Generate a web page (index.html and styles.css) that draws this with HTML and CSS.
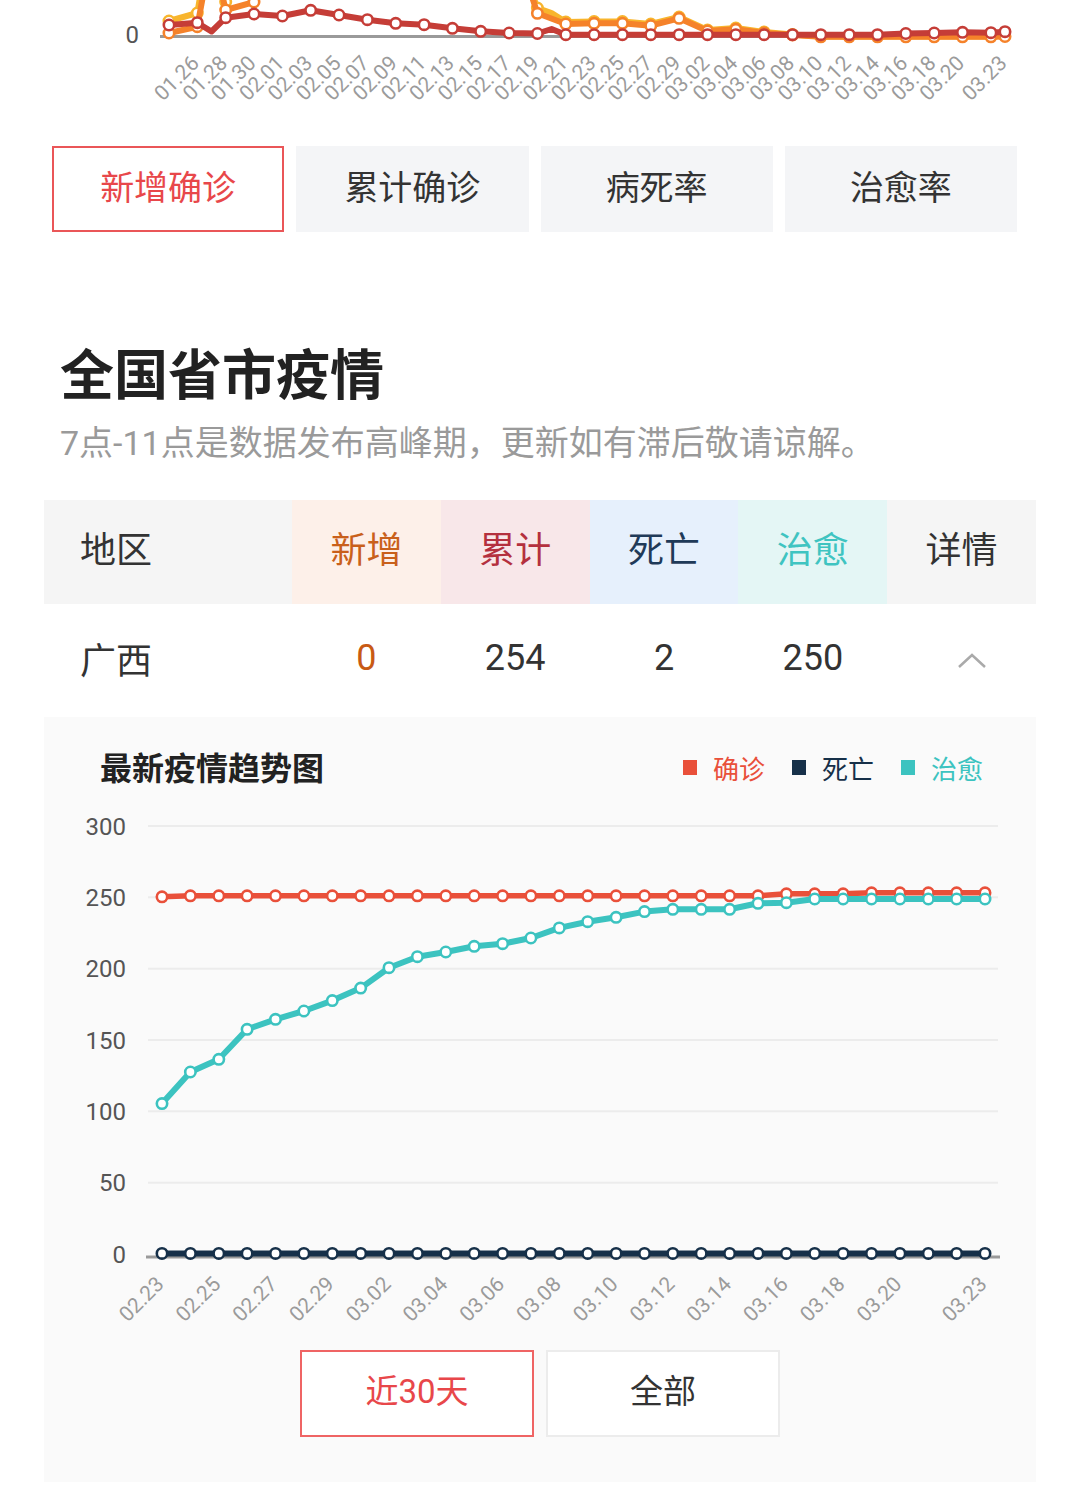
FILE: index.html
```html
<!DOCTYPE html>
<html lang="zh-CN">
<head>
<meta charset="utf-8">
<title>全国省市疫情</title>
<link rel="stylesheet" href="styles.css">
</head>
<body>
<div class="page">
  <section class="overview">
    <svg id="overview" class="overview-svg" width="1069" height="130" viewBox="0 0 1069 130">
      <line class="axis" x1="160" y1="36.5" x2="1010" y2="36.5"></line>
      <text class="ylabel" x="139" y="42.5">0</text>
    </svg>
    <div class="tabs">
      <button class="tab active">新增确诊</button>
      <button class="tab">累计确诊</button>
      <button class="tab">病死率</button>
      <button class="tab">治愈率</button>
    </div>
  </section>

  <section class="province">
    <h2 class="section-title">全国省市疫情</h2>
    <p class="section-note">7点-11点是数据发布高峰期，更新如有滞后敬请谅解。</p>

    <div class="table">
      <div class="thead">
        <div class="th col-area">地区</div>
        <div class="th col-new">新增</div>
        <div class="th col-total">累计</div>
        <div class="th col-dead">死亡</div>
        <div class="th col-cured">治愈</div>
        <div class="th col-detail">详情</div>
      </div>
      <div class="trow">
        <div class="td col-area">广西</div>
        <div class="td num-new">0</div>
        <div class="td">254</div>
        <div class="td">2</div>
        <div class="td">250</div>
        <div class="td caret-cell">
          <svg class="caret" width="30" height="16" viewBox="0 0 30 16"><polyline points="2,14 15,2 28,14"></polyline></svg>
        </div>
      </div>

      <div class="detail-panel">
        <div class="panel-head">
          <h3 class="panel-title">最新疫情趋势图</h3>
          <ul class="legend">
            <li class="lg-confirm"><span class="swatch"></span>确诊</li>
            <li class="lg-dead"><span class="swatch"></span>死亡</li>
            <li class="lg-cured"><span class="swatch"></span>治愈</li>
          </ul>
        </div>
        <svg id="trend" class="trend-svg" width="992" height="556" viewBox="44 789 992 556">
          <line class="grid" x1="148" y1="826" x2="998" y2="826"></line>
          <line class="grid" x1="148" y1="897.3" x2="998" y2="897.3"></line>
          <line class="grid" x1="148" y1="968.7" x2="998" y2="968.7"></line>
          <line class="grid" x1="148" y1="1040" x2="998" y2="1040"></line>
          <line class="grid" x1="148" y1="1111.3" x2="998" y2="1111.3"></line>
          <line class="grid" x1="148" y1="1182.7" x2="998" y2="1182.7"></line>
          <line class="axis" x1="146" y1="1257" x2="1000" y2="1257"></line>
          <text class="ylabel" x="126" y="834.5">300</text>
          <text class="ylabel" x="126" y="905.8">250</text>
          <text class="ylabel" x="126" y="977.2">200</text>
          <text class="ylabel" x="126" y="1048.5">150</text>
          <text class="ylabel" x="126" y="1119.8">100</text>
          <text class="ylabel" x="126" y="1191.2">50</text>
          <text class="ylabel" x="126" y="1262.5">0</text>
        </svg>
        <div class="range-switch">
          <button class="range active">近30天</button>
          <button class="range">全部</button>
        </div>
      </div>
    </div>
  </section>
</div>
<script src="script.js"></script>
</body>
</html>
```

FILE: styles.css
```css
* { box-sizing: border-box; }

html, body {
  margin: 0;
  padding: 0;
  background: #fff;
}

body {
  font-family: Roboto, "Noto Sans CJK SC", sans-serif;
  color: #333;
  width: 1069px;
}

button {
  font-family: inherit;
  padding: 0;
  margin: 0;
  cursor: pointer;
}

/* ---------- overview chart (cut at top) ---------- */
.overview-svg {
  display: block;
  overflow: hidden;
}

.axis {
  stroke: #9a9a9a;
  stroke-width: 3;
}

.grid {
  stroke: #ececec;
  stroke-width: 2;
}

.ylabel {
  font-family: Roboto, sans-serif;
  font-size: 24px;
  fill: #555;
  text-anchor: end;
}

.xlabel {
  font-family: Roboto, sans-serif;
  font-size: 21px;
  fill: #9b9b9b;
  text-anchor: end;
}

.tabs {
  display: flex;
  gap: 12px;
  margin: 16px 52px 0;
}

.tab {
  flex: 1;
  height: 86px;
  padding-bottom: 8px;
  background: #f4f5f7;
  border: 2px solid #f4f5f7;
  font-size: 34px;
  color: #333;
  display: flex;
  align-items: center;
  justify-content: center;
}

.tab.active {
  background: #fff;
  border-color: #ea5658;
  color: #e8474a;
}

/* ---------- province section ---------- */
.section-title {
  margin: 113px 0 0 60px;
  font-size: 54px;
  line-height: 64px;
  font-weight: 700;
  color: #222;
}

.section-note {
  margin: 10px 0 0 60px;
  font-size: 34px;
  line-height: 48px;
  color: #9a9a9a;
}

.table {
  margin: 33px 33px 0 44px;
}

.thead,
.trow {
  display: grid;
  grid-template-columns: 248px repeat(5, 1fr);
}

.thead {
  height: 104px;
}

.trow {
  height: 113px;
}

.th,
.td {
  display: flex;
  align-items: center;
  justify-content: center;
  font-size: 36px;
  color: #333;
}

.th {
  padding-bottom: 10px;
}

.td {
  padding-bottom: 6px;
}

.th.col-area,
.td.col-area {
  justify-content: flex-start;
  padding-left: 36px;
}

.th.col-area,
.th.col-detail {
  background: #f5f5f5;
}

.th.col-new {
  background: #fdf0e9;
  color: #c9601b;
}

.th.col-total {
  background: #f8e7e9;
  color: #b4303e;
}

.th.col-dead {
  background: #e6f0fc;
  color: #1f3a58;
}

.th.col-cured {
  background: #e4f6f5;
  color: #3fc4c1;
}

.td.num-new {
  color: #c85a14;
}

.td.caret-cell {
  padding-left: 20px;
  padding-bottom: 0;
}

.caret polyline {
  fill: none;
  stroke: #aaa;
  stroke-width: 2.5;
}

/* ---------- detail panel ---------- */
.detail-panel {
  background: #fafafa;
  padding: 32px 0 45px;
}

.panel-head {
  display: flex;
  justify-content: space-between;
  align-items: center;
  height: 40px;
  padding: 0 53px 0 56px;
}

.panel-title {
  margin: 0;
  font-size: 32px;
  line-height: 40px;
  font-weight: 700;
  color: #222;
}

.legend {
  display: flex;
  gap: 27px;
  list-style: none;
  margin: 0;
  padding: 0 0 3px;
  font-size: 26px;
}

.legend li {
  display: flex;
  align-items: center;
}

.swatch {
  width: 14px;
  height: 15px;
  margin-right: 16px;
}

.lg-confirm { color: #e9503a; }
.lg-confirm .swatch { background: #e9503a; }
.lg-dead { color: #163049; }
.lg-dead .swatch { background: #163049; }
.lg-cured { color: #3cc3c0; }
.lg-cured .swatch { background: #3cc3c0; }

.trend-svg {
  display: block;
}

.range-switch {
  display: flex;
  justify-content: center;
  gap: 12px;
  margin-top: 5px;
}

.range {
  width: 234px;
  height: 87px;
  padding-bottom: 10px;
  background: #fff;
  border: 2px solid #ececec;
  font-size: 33px;
  color: #333;
}

.range.active {
  border-color: #ef6464;
  color: #e8474a;
}
```

FILE: script.js
```js
(function () {
  var NS = 'http://www.w3.org/2000/svg';

  function el(tag, attrs, parent) {
    var e = document.createElementNS(NS, tag);
    for (var k in attrs) e.setAttribute(k, attrs[k]);
    parent.appendChild(e);
    return e;
  }
  function pad(n) { return (n < 10 ? '0' : '') + n; }
  function fmt(dt) { return pad(dt.getMonth() + 1) + '.' + pad(dt.getDate()); }

  function drawSeries(svg, pts, color, width, r) {
    el('polyline', {
      points: pts.map(function (p) { return p[0].toFixed(1) + ',' + p[1].toFixed(1); }).join(' '),
      fill: 'none', stroke: color, 'stroke-width': width,
      'stroke-linejoin': 'round', 'stroke-linecap': 'round'
    }, svg);
    pts.forEach(function (p) {
      if (p[2]) el('circle', { cx: p[0].toFixed(1), cy: p[1].toFixed(1), r: r, fill: '#fff', stroke: color, 'stroke-width': 2.6 }, svg);
    });
  }

  function xLabel(svg, x, y, text) {
    var t = el('text', { x: x.toFixed(1), y: y, 'class': 'xlabel', transform: 'rotate(-45 ' + x.toFixed(1) + ' ' + y + ')' }, svg);
    t.textContent = text;
  }

  /* ---------- overview chart (daily, starting 01.24) ---------- */
  var ov = document.getElementById('overview');
  var OX = function (d) { return 169 + d * 14.17; };
  function mk(list) { return list.map(function (a) { return [OX(a[0]), a[1], a[2]]; }); }

  var yellow = [[0, 21, 1], [2, 13, 1], [3, -70, 0], [4, 2, 1], [6, -30, 0], [25, -30, 0], [26, 8, 1], [27, 13, 0], [28, 22, 1],
    [30, 21.5, 1], [32, 21.5, 1], [34, 24, 1], [36, 17, 1], [38, 30, 1], [40, 28, 1], [42, 32, 1], [44, 34.5, 1]];
  for (var d = 46; d <= 58; d += 2) yellow.push([d, 36.5, 0]);
  yellow.push([59, 36, 0]);

  var orange = [[0, 33, 1], [2, 26.7, 1], [3, -50, 0], [4, 10, 1], [6, 2, 1], [8, -30, 0], [25, -30, 0], [26, 13.3, 1],
    [28, 24, 1], [30, 23.3, 1], [32, 23.3, 1], [34, 25.7, 1], [36, 18.3, 1], [38, 31, 1], [40, 29.3, 1], [42, 33, 1], [44, 35, 1]];
  for (d = 46; d <= 58; d += 2) orange.push([d, 36.8, 1]);
  orange.push([59, 36.5, 1]);

  var red = [[0, 25, 1], [2, 22.7, 1], [3, 31.5, 0], [4, 17.7, 1], [6, 14, 1], [8, 16, 1], [10, 10.3, 1], [12, 15, 1], [14, 19.7, 1],
    [16, 23.3, 1], [18, 24.7, 1], [20, 28.3, 1], [22, 31.3, 1], [24, 33, 1], [26, 33.5, 1], [27, 29, 0], [28, 34.7, 1]];
  for (d = 30; d <= 50; d += 2) red.push([d, 34.7, 1]);
  red.push([52, 33.5, 1], [54, 33, 1], [56, 32.3, 1], [58, 32.7, 1], [59, 31.7, 1]);

  drawSeries(ov, mk(yellow), '#f8b52d', 6, 5.2);
  drawSeries(ov, mk(orange), '#f5822a', 6, 5.2);
  drawSeries(ov, mk(red), '#c53d37', 6, 5.2);

  var base = new Date(2020, 0, 24);
  function dayLabel(d) { return fmt(new Date(base.getTime() + d * 86400000 + 3600000)); }
  for (d = 2; d <= 56; d += 2) xLabel(ov, OX(d) + 3, 64.5, dayLabel(d));
  xLabel(ov, OX(59) + 3, 64.5, dayLabel(59));

  /* ---------- province trend chart (last 30 days) ---------- */
  var tr = document.getElementById('trend');
  var TX = function (i) { return 162 + i * 28.38; };
  var TY = function (v) { return 1254 - v * 1.4267; };

  var confirmed = [250.4];
  for (var i = 1; i <= 21; i++) confirmed.push(251.1);
  confirmed.push(252.5, 252.5, 252.5, 253.2, 253.2, 253.2, 253.2, 253.2);

  var cured = [105.4, 127.6, 136.5, 157.5, 164.5, 170.3, 177.6, 186.4, 200.7, 208.4, 211.7, 215.7, 217.5, 221.5,
    228.6, 232.9, 236, 240, 241.6, 241.6, 241.6, 245.8, 246.2, 248.8, 248.8, 248.8, 248.8, 248.8, 248.8, 248.8];

  function pts(vals) { return vals.map(function (v, k) { return [TX(k), TY(v), 1]; }); }
  var dead = [];
  for (i = 0; i < 30; i++) dead.push(0.4);

  drawSeries(tr, pts(confirmed), '#e9503a', 5.5, 5.2);
  drawSeries(tr, pts(dead), '#163049', 6, 5.2);
  drawSeries(tr, pts(cured), '#3cc3c0', 6, 5.2);

  var tbase = new Date(2020, 1, 23);
  function tLabel(k) { return fmt(new Date(tbase.getTime() + k * 86400000 + 3600000)); }
  for (i = 0; i <= 26; i += 2) xLabel(tr, TX(i) + 3, 1285.5, tLabel(i));
  xLabel(tr, TX(29) + 3, 1285.5, tLabel(29));
})();
```
